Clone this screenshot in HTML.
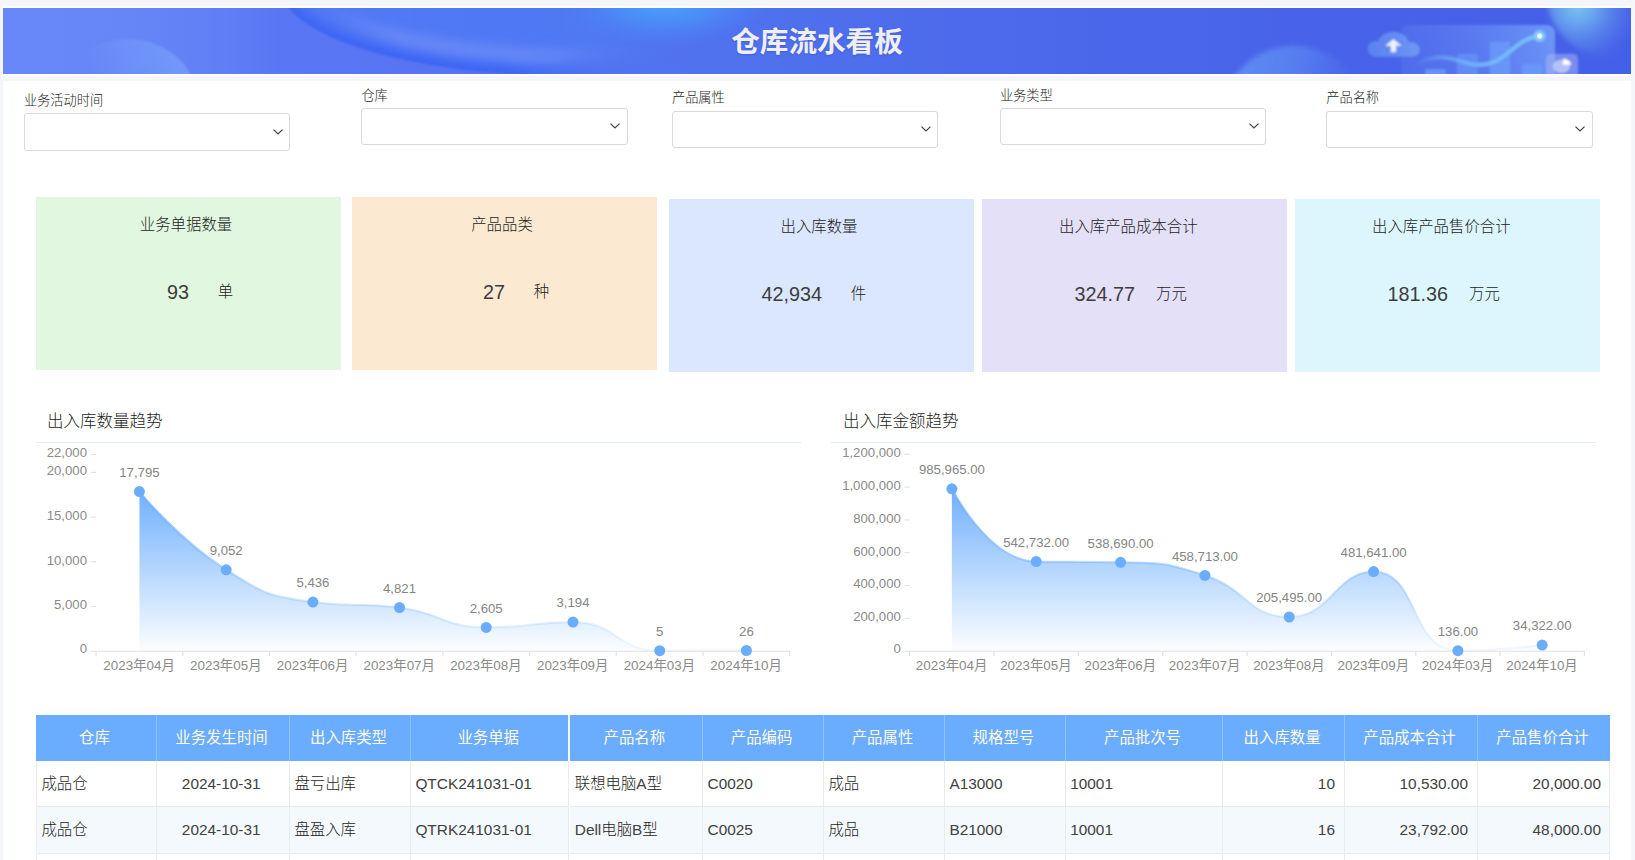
<!DOCTYPE html>
<html lang="zh-CN"><head><meta charset="utf-8"><title>仓库流水看板</title>
<style>
*{box-sizing:border-box;margin:0;padding:0}
html,body{width:1635px;height:860px;overflow:hidden;background:#f5f6fa;font-family:"Liberation Sans","Noto Sans CJK SC",sans-serif;color:#333}
body{position:relative}
.frame{position:absolute;left:3px;top:6px;width:1628px;height:70px;background:#fff}
.banner{position:absolute;left:3px;top:8px;width:1628px;height:66px;overflow:hidden;background:#4d6bec}
.banner svg{position:absolute;left:0;top:0}
.title{position:absolute;left:0;top:0;width:1628px;height:66px;line-height:69px;text-align:center;font-size:28.6px;font-weight:bold;color:#eeeef3;letter-spacing:0;text-shadow:0 1px 2px rgba(40,60,160,.35)}
.panel{position:absolute;left:3px;top:81px;width:1627.5px;height:779px;background:#fff}
  .fl{position:absolute;font-size:13.2px;line-height:19px;color:#1c1c1c;font-weight:300;white-space:nowrap}
.sel{position:absolute;width:266.3px;height:37.4px;border:1px solid #d9d9d9;border-radius:3px;background:#fff}
.sel svg{position:absolute;right:5.4px;top:13.3px}
.card{position:absolute;width:305px;height:172.5px}
.ct{position:absolute;left:0;top:16px;width:300px;text-align:center;font-size:15.4px;line-height:22px;color:#1c1c1c;font-weight:300}
.card .n{position:absolute;right:152px;top:80px;font-size:19.8px;line-height:30px;white-space:nowrap;color:#3c3c3c}
.card .u{position:absolute;left:139.5px;width:100px;top:80px;text-align:center;font-size:15.4px;line-height:30px;white-space:nowrap;color:#1c1c1c;font-weight:300}
.ch{position:absolute;font-size:16.5px;line-height:22px;color:#1c1c1c;font-weight:300;white-space:nowrap}
.sep{position:absolute;height:1px;background:#e6ebf0}
svg.charts{position:absolute;left:0;top:0}
.ax{font-size:13.2px;fill:#8a8a8a;font-family:"Liberation Sans","Noto Sans CJK SC",sans-serif}
.xl{font-size:13.4px}
.dl{font-size:13.2px;fill:#858585;font-family:"Liberation Sans","Noto Sans CJK SC",sans-serif}
.tbl{position:absolute;left:36px;top:715px;width:1575px;height:145px;overflow:hidden;font-size:15.4px}
.th{position:absolute;top:0;height:45.5px;line-height:46.3px;text-align:center;padding-right:3px;background:#6aadff;color:#fdf9ee;border-left:1px solid #8fc1ff;white-space:nowrap}
.th:first-child{border-left:none}
.tr{position:absolute;left:0;width:1574px;background:#fff;border-bottom:1px solid #e9ebee}
.tr.alt{background:#f4f9fe}
.td{position:absolute;top:0;height:100%;line-height:46.5px;padding:0 4.4px;border-left:1px solid #e9ebee;white-space:nowrap;color:#414141}
.edge{position:absolute;left:1573.2px;top:45.5px;width:1px;height:100px;background:#e9ebee}
.fz1{position:absolute;left:532.2px;top:0;width:2px;height:45.5px;background:#f2f7ff}
.fz2{position:absolute;left:533.4px;top:45.5px;width:1px;height:100px;background:#fff}
.td .la{font-weight:400;color:#414141}
.td.p5{padding-left:5.4px}
.td.cj{font-weight:300;color:#1c1c1c}
.td.c{text-align:center;padding-right:8px}
.td.r{text-align:right;padding-right:9px}
</style></head><body>
<div class="frame"></div>
<div class="banner">
<svg width="1628" height="66" viewBox="3 8 1628 66">
<defs>
<linearGradient id="bg" gradientUnits="userSpaceOnUse" x1="3" y1="0" x2="1631" y2="0"><stop offset="0" stop-color="#6887f8"/><stop offset="0.08" stop-color="#6685f7"/><stop offset="0.125" stop-color="#6280f5"/><stop offset="0.17" stop-color="#5977f4"/><stop offset="0.3" stop-color="#5772f2"/><stop offset="0.45" stop-color="#5072ee"/><stop offset="0.6" stop-color="#4c6aeb"/><stop offset="0.8" stop-color="#4863e9"/><stop offset="1" stop-color="#4560e8"/></linearGradient>
<linearGradient id="sw" gradientUnits="userSpaceOnUse" x1="300" y1="0" x2="720" y2="0"><stop offset="0" stop-color="#4f7af6" stop-opacity="0.65"/><stop offset="0.5" stop-color="#4c7cf5" stop-opacity="0.7"/><stop offset="1" stop-color="#4c80f4" stop-opacity="0.55"/></linearGradient>
<radialGradient id="hl" gradientUnits="userSpaceOnUse" cx="0" cy="0" r="1" gradientTransform="translate(666 4) scale(104 42)"><stop offset="0" stop-color="#49a2fb" stop-opacity="1"/><stop offset="0.45" stop-color="#4a94f8" stop-opacity="0.7"/><stop offset="1" stop-color="#4c80f4" stop-opacity="0"/></radialGradient>
<linearGradient id="lb" gradientUnits="userSpaceOnUse" x1="95" y1="80" x2="175" y2="45"><stop offset="0" stop-color="#7aa6fb" stop-opacity="0"/><stop offset="1" stop-color="#76a0fa" stop-opacity="0.75"/></linearGradient>
<linearGradient id="bb" gradientUnits="userSpaceOnUse" x1="1250" y1="45" x2="1350" y2="80"><stop offset="0" stop-color="#6290f4" stop-opacity="0.85"/><stop offset="0.5" stop-color="#5c88f2" stop-opacity="0.7"/><stop offset="1" stop-color="#5078ee" stop-opacity="0.15"/></linearGradient>
<radialGradient id="tr" gradientUnits="userSpaceOnUse" cx="1578" cy="6" r="62"><stop offset="0" stop-color="#7cc6f0" stop-opacity="1"/><stop offset="0.3" stop-color="#6eaef0" stop-opacity="0.85"/><stop offset="0.7" stop-color="#5a88ee" stop-opacity="0.45"/><stop offset="1" stop-color="#4c6cea" stop-opacity="0"/></radialGradient>
<linearGradient id="pn" gradientUnits="userSpaceOnUse" x1="1400" y1="74" x2="1555" y2="25"><stop offset="0" stop-color="#5a7cf0" stop-opacity="0.35"/><stop offset="0.5" stop-color="#6488f3" stop-opacity="0.65"/><stop offset="1" stop-color="#74a0f9" stop-opacity="0.85"/></linearGradient>
<linearGradient id="cl" gradientUnits="userSpaceOnUse" x1="1367" y1="0" x2="1420" y2="0"><stop offset="0" stop-color="#5a84f0"/><stop offset="1" stop-color="#7099f6"/></linearGradient>
<linearGradient id="ln" gradientUnits="userSpaceOnUse" x1="1415" y1="0" x2="1540" y2="0"><stop offset="0" stop-color="#78bcfc" stop-opacity="0"/><stop offset="0.25" stop-color="#74b8fb" stop-opacity="0.55"/><stop offset="0.6" stop-color="#72b8fc" stop-opacity="0.95"/><stop offset="1" stop-color="#76c0fd" stop-opacity="1"/></linearGradient>
<radialGradient id="dot" gradientUnits="userSpaceOnUse" cx="1539.6" cy="36" r="7.5"><stop offset="0" stop-color="#fff"/><stop offset="0.22" stop-color="#fff"/><stop offset="0.42" stop-color="#90d4ff" stop-opacity="0.95"/><stop offset="1" stop-color="#78c0fd" stop-opacity="0.15"/></radialGradient>
<clipPath id="bc"><rect x="3" y="8" width="1628" height="66"/></clipPath>
<mask id="swm" maskUnits="userSpaceOnUse" x="270" y="0" width="500" height="80"><ellipse cx="570" cy="-14" rx="290" ry="90" fill="#fff" filter="url(#b07)"/></mask>
<linearGradient id="rfg" gradientUnits="userSpaceOnUse" x1="622" y1="0" x2="662" y2="82"><stop offset="0" stop-color="#fff"/><stop offset="0.25" stop-color="#fff"/><stop offset="0.85" stop-color="#000"/></linearGradient>
<mask id="rfade" maskUnits="userSpaceOnUse" x="270" y="-110" width="500" height="200"><rect x="270" y="-110" width="500" height="200" fill="url(#rfg)"/></mask>
<linearGradient id="rf" gradientUnits="userSpaceOnUse" x1="300" y1="0" x2="640" y2="0"><stop offset="0" stop-color="#fff"/><stop offset="0.6" stop-color="#fff"/><stop offset="1" stop-color="#000"/></linearGradient>
<linearGradient id="cf" gradientUnits="userSpaceOnUse" x1="320" y1="0" x2="640" y2="0"><stop offset="0" stop-color="#000"/><stop offset="0.25" stop-color="#fff"/><stop offset="0.65" stop-color="#fff"/><stop offset="1" stop-color="#000"/></linearGradient>
<mask id="crfade" maskUnits="userSpaceOnUse" x="280" y="-110" width="460" height="200"><rect x="280" y="-110" width="460" height="200" fill="url(#cf)"/></mask>
<mask id="rimfade" maskUnits="userSpaceOnUse" x="280" y="-110" width="460" height="200"><rect x="280" y="-110" width="460" height="200" fill="url(#rf)"/></mask>
<filter id="b1" x="-20%" y="-20%" width="140%" height="140%"><feGaussianBlur stdDeviation="1.2"/></filter>
<filter id="b2" x="-20%" y="-20%" width="140%" height="140%"><feGaussianBlur stdDeviation="2.5"/></filter>
<filter id="b5" x="-30%" y="-30%" width="160%" height="160%"><feGaussianBlur stdDeviation="6"/></filter>
<filter id="b07" x="-20%" y="-20%" width="140%" height="140%"><feGaussianBlur stdDeviation="0.8"/></filter>
</defs>
<g clip-path="url(#bc)">
<rect x="3" y="8" width="1628" height="66" fill="url(#bg)"/>
<!-- left soft dome -->
<path d="M60 80 C70 50 115 30 152 43 C174 51 187 64 193 80 Z" fill="url(#lb)" filter="url(#b1)"/>
<!-- big swoosh -->
<g mask="url(#swm)">
<g mask="url(#rfade)">
<rect x="280" y="0" width="480" height="80" fill="url(#sw)"/>
<ellipse cx="570" cy="-14" rx="290" ry="90" fill="none" stroke="#3a60f3" stroke-opacity="0.85" stroke-width="18" filter="url(#b5)" mask="url(#rimfade)"/>
<ellipse cx="575" cy="-16" rx="262" ry="72" fill="none" stroke="#7692f7" stroke-opacity="0.75" stroke-width="12" filter="url(#b5)" mask="url(#crfade)"/>
</g>
<ellipse cx="666" cy="4" rx="104" ry="42" fill="url(#hl)"/>
</g>
<!-- bottom dome -->
<circle cx="1293.5" cy="118.5" r="72.5" fill="url(#bb)" filter="url(#b2)"/>
<!-- top right glow -->
<circle cx="1612" cy="-8" r="66" fill="url(#tr)" filter="url(#b2)"/>
<!-- panel -->
<rect x="1401" y="25" width="154" height="70" rx="8" fill="url(#pn)" filter="url(#b07)"/>
<!-- bars -->
<g filter="url(#b07)">
<rect x="1425" y="69" width="21" height="10" rx="2" fill="#6a98fa" fill-opacity="0.8"/>
<rect x="1457" y="53.8" width="21" height="25" rx="2" fill="#6a98fa" fill-opacity="0.6"/>
<rect x="1489.7" y="41.6" width="20.5" height="40" rx="2" fill="#6e9cfb" fill-opacity="0.7"/>
<rect x="1522" y="63.9" width="20.3" height="15" rx="2" fill="#6a98fa" fill-opacity="0.85"/>
</g>
<!-- curve -->
<path d="M1418 64 C1432 55 1446 56 1460 61 C1474 66 1486 67 1498 60 C1512 52 1520 38 1539.6 36" fill="none" stroke="url(#ln)" stroke-width="4.4" stroke-linecap="round" filter="url(#b07)"/>
<circle cx="1539.6" cy="36" r="7.5" fill="url(#dot)"/>
<!-- cloud -->
<g filter="url(#b07)">
<path d="M1376.5 56.8 C1371 56.8 1367.7 53 1367.7 48.5 C1367.7 43.5 1372 40 1378.2 41.2 C1380 35.5 1386 31.8 1393.5 31.8 C1401.5 31.8 1407.5 37 1408.7 42.3 C1414.5 41 1419.8 44.5 1419.8 49.5 C1419.8 53.8 1416.5 56.8 1412 56.8 Z" fill="url(#cl)" fill-opacity="0.92"/>
<path d="M1393.4 39.6 L1400.6 45.4 L1395.7 45.4 L1395.7 51.8 L1391.1 51.8 L1391.1 45.4 L1386.2 45.4 Z" fill="#eef2ff" stroke="#eef2ff" stroke-width="0.8" stroke-linejoin="round"/>
</g>
<!-- pie box -->
<g filter="url(#b07)">
<rect x="1546" y="53.8" width="32" height="32" rx="5" fill="#a9b8f6" fill-opacity="0.5"/>
<ellipse cx="1561.3" cy="66.4" rx="8.8" ry="6.6" fill="#c6d0fa" fill-opacity="0.8"/>
<path d="M1562.8 58.8 C1567.5 58.8 1571 61.5 1571.6 64.8 L1562.8 64.8 Z" fill="#fff"/>
</g>
</g>
</svg>

<div class="title">仓库流水看板</div>
</div>
<div class="panel"></div>
<div class="fl" style="left:24.0px;top:91.0px">业务活动时间</div><div class="sel" style="left:24.0px;top:113.2px;height:37.6px"><svg width="12" height="8" viewBox="0 0 12 8" style="top:13.7px"><path d="M1.5 1.6 L6 6 L10.5 1.6" fill="none" stroke="#404040" stroke-width="1.2"/></svg></div>
<div class="fl" style="left:361.4px;top:85.6px">仓库</div><div class="sel" style="left:361.4px;top:108.0px;height:36.8px"><svg width="12" height="8" viewBox="0 0 12 8" style="top:13.3px"><path d="M1.5 1.6 L6 6 L10.5 1.6" fill="none" stroke="#404040" stroke-width="1.2"/></svg></div>
<div class="fl" style="left:672.0px;top:88.2px">产品属性</div><div class="sel" style="left:672.0px;top:111.2px;height:36.6px"><svg width="12" height="8" viewBox="0 0 12 8" style="top:13.2px"><path d="M1.5 1.6 L6 6 L10.5 1.6" fill="none" stroke="#404040" stroke-width="1.2"/></svg></div>
<div class="fl" style="left:1000.0px;top:85.8px">业务类型</div><div class="sel" style="left:1000.0px;top:108.0px;height:36.8px"><svg width="12" height="8" viewBox="0 0 12 8" style="top:13.3px"><path d="M1.5 1.6 L6 6 L10.5 1.6" fill="none" stroke="#404040" stroke-width="1.2"/></svg></div>
<div class="fl" style="left:1326.3px;top:88.2px">产品名称</div><div class="sel" style="left:1326.3px;top:111.2px;height:36.6px"><svg width="12" height="8" viewBox="0 0 12 8" style="top:13.2px"><path d="M1.5 1.6 L6 6 L10.5 1.6" fill="none" stroke="#404040" stroke-width="1.2"/></svg></div>

<div class="card" style="left:36px;top:197px;background:#e2f7e0"><div class="ct" style="left:0.0px;top:16.6px">业务单据数量</div><div class="n">93</div><div class="u">单</div></div>
<div class="card" style="left:352px;top:197px;background:#fbead1"><div class="ct" style="left:0.0px;top:16.6px">产品品类</div><div class="n">27</div><div class="u">种</div></div>
<div class="card" style="left:669px;top:199px;background:#dbe7fe"><div class="ct" style="left:0.0px;top:17.4px">出入库数量</div><div class="n">42,934</div><div class="u">件</div></div>
<div class="card" style="left:982px;top:199px;background:#e4e0f8"><div class="ct" style="left:-3.7px;top:17.4px">出入库产品成本合计</div><div class="n">324.77</div><div class="u">万元</div></div>
<div class="card" style="left:1295px;top:199px;background:#ddf6fe"><div class="ct" style="left:-3.7px;top:17.4px">出入库产品售价合计</div><div class="n">181.36</div><div class="u">万元</div></div>

<div class="ch" style="left:47px;top:410px">出入库数量趋势</div>
<div class="sep" style="left:36px;top:442px;width:765px"></div>
<div class="ch" style="left:843px;top:410px">出入库金额趋势</div>
<div class="sep" style="left:831px;top:442px;width:765px"></div>
<svg class="charts" width="1635" height="700" viewBox="0 0 1635 700">
<defs><linearGradient id="ga" gradientUnits="userSpaceOnUse" x1="0" y1="491.6" x2="0" y2="650.7"><stop offset="0" stop-color="#68acfd" stop-opacity="0.95"/><stop offset="1" stop-color="#68acfd" stop-opacity="0.02"/></linearGradient><linearGradient id="sa" gradientUnits="userSpaceOnUse" x1="0" y1="491.6" x2="0" y2="650.7"><stop offset="0" stop-color="#6aadfd" stop-opacity="0.7"/><stop offset="1" stop-color="#6aadfd" stop-opacity="0.08"/></linearGradient></defs>
<path d="M139.45,491.60C139.45,491.60 177.79,538.95 226.15,569.77C264.49,594.20 268.13,596.24 312.85,602.10C354.83,607.60 356.71,602.10 399.55,607.60C443.41,613.22 442.39,627.41 486.25,627.41C529.09,627.41 530.67,622.14 572.95,622.14C617.37,622.14 615.19,650.66 659.65,650.66C701.89,650.66 746.35,650.47 746.35,650.47L746.35,650.70 L139.45,650.70 Z" fill="url(#ga)"/>
<path d="M139.45,491.60C139.45,491.60 177.79,538.95 226.15,569.77C264.49,594.20 268.13,596.24 312.85,602.10C354.83,607.60 356.71,602.10 399.55,607.60C443.41,613.22 442.39,627.41 486.25,627.41C529.09,627.41 530.67,622.14 572.95,622.14C617.37,622.14 615.19,650.66 659.65,650.66C701.89,650.66 746.35,650.47 746.35,650.47" fill="none" stroke="url(#sa)" stroke-width="2.2"/>
<line x1="90.9" y1="454.50" x2="96.1" y2="454.50" stroke="#e0e0e0" stroke-width="1.1"/>
<text x="87.0" y="457.3" text-anchor="end" class="ax">22,000</text>
<line x1="90.9" y1="472.38" x2="96.1" y2="472.38" stroke="#e0e0e0" stroke-width="1.1"/>
<text x="87.0" y="475.2" text-anchor="end" class="ax">20,000</text>
<line x1="90.9" y1="517.09" x2="96.1" y2="517.09" stroke="#e0e0e0" stroke-width="1.1"/>
<text x="87.0" y="519.9" text-anchor="end" class="ax">15,000</text>
<line x1="90.9" y1="561.79" x2="96.1" y2="561.79" stroke="#e0e0e0" stroke-width="1.1"/>
<text x="87.0" y="564.6" text-anchor="end" class="ax">10,000</text>
<line x1="90.9" y1="606.50" x2="96.1" y2="606.50" stroke="#e0e0e0" stroke-width="1.1"/>
<text x="87.0" y="609.3" text-anchor="end" class="ax">5,000</text>
<text x="87.0" y="653.0" text-anchor="end" class="ax">0</text>
<line x1="90.9" y1="651.25" x2="790.2" y2="651.25" stroke="#e0e0e0" stroke-width="1.1"/>
<line x1="96.10" y1="651.20" x2="96.10" y2="656.20" stroke="#e0e0e0" stroke-width="1.1"/>
<line x1="182.80" y1="651.20" x2="182.80" y2="656.20" stroke="#e0e0e0" stroke-width="1.1"/>
<line x1="269.50" y1="651.20" x2="269.50" y2="656.20" stroke="#e0e0e0" stroke-width="1.1"/>
<line x1="356.20" y1="651.20" x2="356.20" y2="656.20" stroke="#e0e0e0" stroke-width="1.1"/>
<line x1="442.90" y1="651.20" x2="442.90" y2="656.20" stroke="#e0e0e0" stroke-width="1.1"/>
<line x1="529.60" y1="651.20" x2="529.60" y2="656.20" stroke="#e0e0e0" stroke-width="1.1"/>
<line x1="616.30" y1="651.20" x2="616.30" y2="656.20" stroke="#e0e0e0" stroke-width="1.1"/>
<line x1="703.00" y1="651.20" x2="703.00" y2="656.20" stroke="#e0e0e0" stroke-width="1.1"/>
<line x1="789.70" y1="651.20" x2="789.70" y2="656.20" stroke="#e0e0e0" stroke-width="1.1"/>
<text x="139.1" y="669.5" text-anchor="middle" class="ax xl">2023年04月</text>
<text x="225.8" y="669.5" text-anchor="middle" class="ax xl">2023年05月</text>
<text x="312.6" y="669.5" text-anchor="middle" class="ax xl">2023年06月</text>
<text x="399.2" y="669.5" text-anchor="middle" class="ax xl">2023年07月</text>
<text x="485.9" y="669.5" text-anchor="middle" class="ax xl">2023年08月</text>
<text x="572.7" y="669.5" text-anchor="middle" class="ax xl">2023年09月</text>
<text x="659.4" y="669.5" text-anchor="middle" class="ax xl">2024年03月</text>
<text x="746.1" y="669.5" text-anchor="middle" class="ax xl">2024年10月</text>
<circle cx="139.4" cy="491.6" r="5.5" fill="#6aadfd"/>
<text x="139.4" y="476.8" text-anchor="middle" class="dl">17,795</text>
<circle cx="226.2" cy="569.8" r="5.5" fill="#6aadfd"/>
<text x="226.2" y="555.0" text-anchor="middle" class="dl">9,052</text>
<circle cx="312.9" cy="602.1" r="5.5" fill="#6aadfd"/>
<text x="312.9" y="587.3" text-anchor="middle" class="dl">5,436</text>
<circle cx="399.5" cy="607.6" r="5.5" fill="#6aadfd"/>
<text x="399.5" y="592.8" text-anchor="middle" class="dl">4,821</text>
<circle cx="486.2" cy="627.4" r="5.5" fill="#6aadfd"/>
<text x="486.2" y="612.6" text-anchor="middle" class="dl">2,605</text>
<circle cx="573.0" cy="622.1" r="5.5" fill="#6aadfd"/>
<text x="573.0" y="607.3" text-anchor="middle" class="dl">3,194</text>
<circle cx="659.7" cy="650.7" r="5.5" fill="#6aadfd"/>
<text x="659.7" y="635.9" text-anchor="middle" class="dl">5</text>
<circle cx="746.4" cy="650.5" r="5.5" fill="#6aadfd"/>
<text x="746.4" y="635.7" text-anchor="middle" class="dl">26</text>
<defs><linearGradient id="gb" gradientUnits="userSpaceOnUse" x1="0" y1="488.8" x2="0" y2="650.7"><stop offset="0" stop-color="#68acfd" stop-opacity="0.95"/><stop offset="1" stop-color="#68acfd" stop-opacity="0.02"/></linearGradient><linearGradient id="sb" gradientUnits="userSpaceOnUse" x1="0" y1="488.8" x2="0" y2="650.7"><stop offset="0" stop-color="#6aadfd" stop-opacity="0.7"/><stop offset="1" stop-color="#6aadfd" stop-opacity="0.08"/></linearGradient></defs>
<path d="M951.87,488.84C951.87,488.84 988.21,560.73 1036.21,561.60C1072.55,562.27 1078.63,561.60 1120.55,562.27C1162.97,562.94 1164.76,562.38 1204.89,575.39C1249.10,589.73 1247.44,616.96 1289.23,616.96C1331.78,616.96 1335.36,571.63 1373.57,571.63C1419.70,571.63 1409.19,650.68 1457.91,650.68C1493.53,650.68 1542.25,645.07 1542.25,645.07L1542.25,650.70 L951.87,650.70 Z" fill="url(#gb)"/>
<path d="M951.87,488.84C951.87,488.84 988.21,560.73 1036.21,561.60C1072.55,562.27 1078.63,561.60 1120.55,562.27C1162.97,562.94 1164.76,562.38 1204.89,575.39C1249.10,589.73 1247.44,616.96 1289.23,616.96C1331.78,616.96 1335.36,571.63 1373.57,571.63C1419.70,571.63 1409.19,650.68 1457.91,650.68C1493.53,650.68 1542.25,645.07 1542.25,645.07" fill="none" stroke="url(#sb)" stroke-width="2.2"/>
<line x1="904.5" y1="454.20" x2="909.7" y2="454.20" stroke="#e0e0e0" stroke-width="1.1"/>
<text x="900.8" y="457.0" text-anchor="end" class="ax">1,200,000</text>
<line x1="904.5" y1="487.03" x2="909.7" y2="487.03" stroke="#e0e0e0" stroke-width="1.1"/>
<text x="900.8" y="489.8" text-anchor="end" class="ax">1,000,000</text>
<line x1="904.5" y1="519.87" x2="909.7" y2="519.87" stroke="#e0e0e0" stroke-width="1.1"/>
<text x="900.8" y="522.7" text-anchor="end" class="ax">800,000</text>
<line x1="904.5" y1="552.70" x2="909.7" y2="552.70" stroke="#e0e0e0" stroke-width="1.1"/>
<text x="900.8" y="555.5" text-anchor="end" class="ax">600,000</text>
<line x1="904.5" y1="585.53" x2="909.7" y2="585.53" stroke="#e0e0e0" stroke-width="1.1"/>
<text x="900.8" y="588.3" text-anchor="end" class="ax">400,000</text>
<line x1="904.5" y1="618.37" x2="909.7" y2="618.37" stroke="#e0e0e0" stroke-width="1.1"/>
<text x="900.8" y="621.2" text-anchor="end" class="ax">200,000</text>
<text x="900.8" y="653.0" text-anchor="end" class="ax">0</text>
<line x1="904.5" y1="651.25" x2="1584.9" y2="651.25" stroke="#e0e0e0" stroke-width="1.1"/>
<line x1="909.70" y1="651.20" x2="909.70" y2="656.20" stroke="#e0e0e0" stroke-width="1.1"/>
<line x1="994.04" y1="651.20" x2="994.04" y2="656.20" stroke="#e0e0e0" stroke-width="1.1"/>
<line x1="1078.38" y1="651.20" x2="1078.38" y2="656.20" stroke="#e0e0e0" stroke-width="1.1"/>
<line x1="1162.72" y1="651.20" x2="1162.72" y2="656.20" stroke="#e0e0e0" stroke-width="1.1"/>
<line x1="1247.06" y1="651.20" x2="1247.06" y2="656.20" stroke="#e0e0e0" stroke-width="1.1"/>
<line x1="1331.40" y1="651.20" x2="1331.40" y2="656.20" stroke="#e0e0e0" stroke-width="1.1"/>
<line x1="1415.74" y1="651.20" x2="1415.74" y2="656.20" stroke="#e0e0e0" stroke-width="1.1"/>
<line x1="1500.08" y1="651.20" x2="1500.08" y2="656.20" stroke="#e0e0e0" stroke-width="1.1"/>
<line x1="1584.42" y1="651.20" x2="1584.42" y2="656.20" stroke="#e0e0e0" stroke-width="1.1"/>
<text x="951.6" y="669.5" text-anchor="middle" class="ax xl">2023年04月</text>
<text x="1035.9" y="669.5" text-anchor="middle" class="ax xl">2023年05月</text>
<text x="1120.3" y="669.5" text-anchor="middle" class="ax xl">2023年06月</text>
<text x="1204.6" y="669.5" text-anchor="middle" class="ax xl">2023年07月</text>
<text x="1288.9" y="669.5" text-anchor="middle" class="ax xl">2023年08月</text>
<text x="1373.3" y="669.5" text-anchor="middle" class="ax xl">2023年09月</text>
<text x="1457.6" y="669.5" text-anchor="middle" class="ax xl">2024年03月</text>
<text x="1542.0" y="669.5" text-anchor="middle" class="ax xl">2024年10月</text>
<circle cx="951.9" cy="488.8" r="5.5" fill="#6aadfd"/>
<text x="951.9" y="474.0" text-anchor="middle" class="dl">985,965.00</text>
<circle cx="1036.2" cy="561.6" r="5.5" fill="#6aadfd"/>
<text x="1036.2" y="546.8" text-anchor="middle" class="dl">542,732.00</text>
<circle cx="1120.6" cy="562.3" r="5.5" fill="#6aadfd"/>
<text x="1120.6" y="547.5" text-anchor="middle" class="dl">538,690.00</text>
<circle cx="1204.9" cy="575.4" r="5.5" fill="#6aadfd"/>
<text x="1204.9" y="560.6" text-anchor="middle" class="dl">458,713.00</text>
<circle cx="1289.2" cy="617.0" r="5.5" fill="#6aadfd"/>
<text x="1289.2" y="602.2" text-anchor="middle" class="dl">205,495.00</text>
<circle cx="1373.6" cy="571.6" r="5.5" fill="#6aadfd"/>
<text x="1373.6" y="556.8" text-anchor="middle" class="dl">481,641.00</text>
<circle cx="1457.9" cy="650.7" r="5.5" fill="#6aadfd"/>
<text x="1457.9" y="635.9" text-anchor="middle" class="dl">136.00</text>
<circle cx="1542.2" cy="645.1" r="5.5" fill="#6aadfd"/>
<text x="1542.2" y="630.3" text-anchor="middle" class="dl">34,322.00</text>
</svg>
<div class="tbl"><div class="th" style="left:0.0px;width:120.0px">仓库</div><div class="th" style="left:120.0px;width:133.0px">业务发生时间</div><div class="th" style="left:253.0px;width:121.0px">出入库类型</div><div class="th" style="left:374.0px;width:158.4px">业务单据</div><div class="th" style="left:532.4px;width:133.8px">产品名称</div><div class="th" style="left:666.2px;width:120.8px">产品编码</div><div class="th" style="left:787.0px;width:121.0px">产品属性</div><div class="th" style="left:908.0px;width:120.8px">规格型号</div><div class="th" style="left:1028.8px;width:157.4px">产品批次号</div><div class="th" style="left:1186.2px;width:121.8px">出入库数量</div><div class="th" style="left:1308.0px;width:133.0px">产品成本合计</div><div class="th" style="left:1441.0px;width:133.0px">产品售价合计</div><div class="tr " style="top:45.5px;height:46.2px"><div class="td l cj" style="left:0.0px;width:120.0px">成品仓</div><div class="td c" style="left:120.0px;width:133.0px">2024-10-31</div><div class="td l cj" style="left:253.0px;width:121.0px">盘亏出库</div><div class="td l" style="left:374.0px;width:158.4px">QTCK241031-01</div><div class="td l cj p5" style="left:532.4px;width:133.8px">联想电脑<span class="la">A</span>型</div><div class="td l" style="left:666.2px;width:120.8px">C0020</div><div class="td l cj" style="left:787.0px;width:121.0px">成品</div><div class="td l" style="left:908.0px;width:120.8px">A13000</div><div class="td l" style="left:1028.8px;width:157.4px">10001</div><div class="td r" style="left:1186.2px;width:121.8px">10</div><div class="td r" style="left:1308.0px;width:133.0px">10,530.00</div><div class="td r" style="left:1441.0px;width:133.0px">20,000.00</div></div><div class="tr alt" style="top:91.7px;height:46.9px"><div class="td l cj" style="left:0.0px;width:120.0px">成品仓</div><div class="td c" style="left:120.0px;width:133.0px">2024-10-31</div><div class="td l cj" style="left:253.0px;width:121.0px">盘盈入库</div><div class="td l" style="left:374.0px;width:158.4px">QTRK241031-01</div><div class="td l cj p5" style="left:532.4px;width:133.8px"><span class="la">Dell</span>电脑<span class="la">B</span>型</div><div class="td l" style="left:666.2px;width:120.8px">C0025</div><div class="td l cj" style="left:787.0px;width:121.0px">成品</div><div class="td l" style="left:908.0px;width:120.8px">B21000</div><div class="td l" style="left:1028.8px;width:157.4px">10001</div><div class="td r" style="left:1186.2px;width:121.8px">16</div><div class="td r" style="left:1308.0px;width:133.0px">23,792.00</div><div class="td r" style="left:1441.0px;width:133.0px">48,000.00</div></div><div class="tr " style="top:138.6px;height:46.4px"><div class="td l" style="left:0.0px;width:120.0px"></div><div class="td c" style="left:120.0px;width:133.0px"></div><div class="td l" style="left:253.0px;width:121.0px"></div><div class="td l" style="left:374.0px;width:158.4px"></div><div class="td l p5" style="left:532.4px;width:133.8px"></div><div class="td l" style="left:666.2px;width:120.8px"></div><div class="td l" style="left:787.0px;width:121.0px"></div><div class="td l" style="left:908.0px;width:120.8px"></div><div class="td l" style="left:1028.8px;width:157.4px"></div><div class="td r" style="left:1186.2px;width:121.8px"></div><div class="td r" style="left:1308.0px;width:133.0px"></div><div class="td r" style="left:1441.0px;width:133.0px"></div></div><div class="fz1"></div><div class="fz2"></div><div class="edge"></div></div>
</body></html>
